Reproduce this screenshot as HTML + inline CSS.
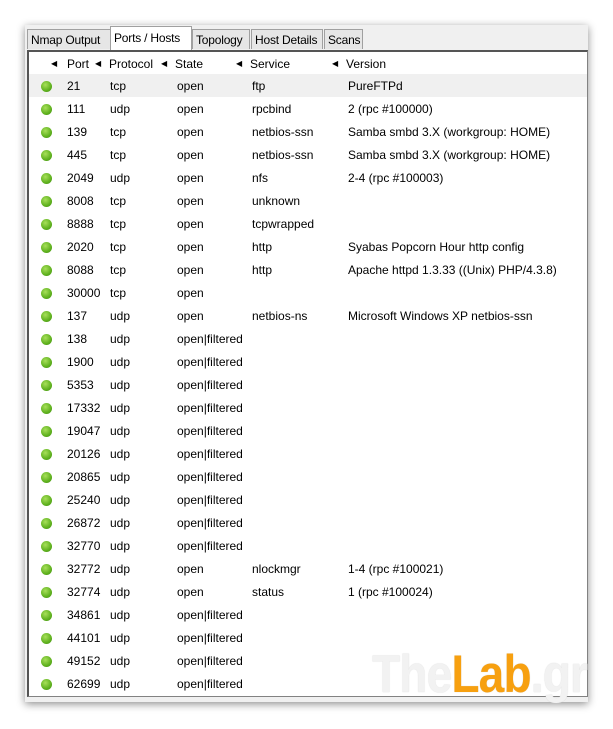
<!DOCTYPE html>
<html><head><style>
body{margin:0;width:613px;height:729px;background:#fff;position:relative;overflow:hidden;font-family:Tahoma,"Liberation Sans",sans-serif;font-size:12px;color:#000}
.panel{position:absolute;left:25px;top:25px;width:563px;height:677px;background:#f0f0f0;box-shadow:0 2px 8px rgba(0,0,0,.45);}
.tab{position:absolute;top:4px;height:20px;border:1px solid #a0a0a0;border-bottom:none;background:#e6e6e6;line-height:20px;padding:0 3px;box-sizing:border-box;white-space:nowrap;overflow:hidden;letter-spacing:-0.2px}
.tab.sel{top:1px;height:24px;background:#fff;line-height:22px;z-index:2}
.tbl{position:absolute;left:2px;top:25px;width:561px;height:647px;background:#fff;border:1px solid #828282;border-left:2px solid #555;border-top:2px solid #555;box-sizing:border-box;overflow:hidden}
.hdr{position:absolute;left:0;top:0;width:100%;height:22px;background:#fff;border-bottom:1px solid #e3e3e3}
.hdr span{position:absolute;top:5px}
.hdr i{position:absolute;top:5px;font-style:normal;font-size:8px;line-height:14px}
.row{position:absolute;left:0;width:100%;height:23px}
.row span{position:absolute;top:5px;white-space:nowrap}
.dot{position:absolute;left:12px;top:7px;width:11px;height:11px;border-radius:50%;background:radial-gradient(circle at 40% 35%,#a8e05a,#5fb11e 60%,#3e8a10)}
.wm{position:absolute;left:372px;top:648px;font-family:"Liberation Sans Narrow","Liberation Sans",sans-serif;font-weight:bold;font-size:53px;letter-spacing:-1px;transform:scaleX(0.87);transform-origin:left;color:#f2f2f2;text-shadow:0 0 1px #ccc;line-height:53px}
.wm em{font-style:normal;color:#f7a010}
</style></head><body>
<div class="panel">
<div class="tab" style="left:2px;width:84px">Nmap Output</div>
<div class="tab sel" style="left:85px;width:82px">Ports / Hosts</div>
<div class="tab" style="left:167px;width:58px">Topology</div>
<div class="tab" style="left:226px;width:72px">Host Details</div>
<div class="tab" style="left:299px;width:39px">Scans</div>
<div class="tbl">
<div class="hdr">
<i style="left:22px">◀</i><span style="left:38px">Port</span><i style="left:66px">◀</i><span style="left:80px">Protocol</span><i style="left:132px">◀</i><span style="left:146px">State</span><i style="left:207px">◀</i><span style="left:221px">Service</span><i style="left:303px">◀</i><span style="left:317px">Version</span>
</div>
<div id="rows"></div>
</div>
</div>
<div class="wm">The<em>Lab</em>.gr</div>
<script>
var d=[["21","tcp","open","ftp","PureFTPd"],["111","udp","open","rpcbind","2 (rpc #100000)"],["139","tcp","open","netbios-ssn","Samba smbd 3.X (workgroup: HOME)"],["445","tcp","open","netbios-ssn","Samba smbd 3.X (workgroup: HOME)"],["2049","udp","open","nfs","2-4 (rpc #100003)"],["8008","tcp","open","unknown",""],["8888","tcp","open","tcpwrapped",""],["2020","tcp","open","http","Syabas Popcorn Hour http config"],["8088","tcp","open","http","Apache httpd 1.3.33 ((Unix) PHP/4.3.8)"],["30000","tcp","open","",""],["137","udp","open","netbios-ns","Microsoft Windows XP netbios-ssn"]];
["138","1900","5353","17332","19047","20126","20865","25240","26872","32770"].forEach(p=>d.push([p,"udp","open|filtered","",""]));
d.push(["32772","udp","open","nlockmgr","1-4 (rpc #100021)"],["32774","udp","open","status","1 (rpc #100024)"]);
["34861","44101","49152","62699"].forEach(p=>d.push([p,"udp","open|filtered","",""]));
var h="";d.forEach((r,i)=>{h+='<div class="row" style="top:'+(22+i*23)+'px;'+(i==0?'background:#f0f0f0':'')+'"><div class="dot"></div><span style="left:38px">'+r[0]+'</span><span style="left:81px">'+r[1]+'</span><span style="left:148px">'+r[2]+'</span><span style="left:223px">'+r[3]+'</span><span style="left:319px">'+r[4]+'</span></div>'});
document.getElementById("rows").innerHTML=h;
</script>
</body></html>
